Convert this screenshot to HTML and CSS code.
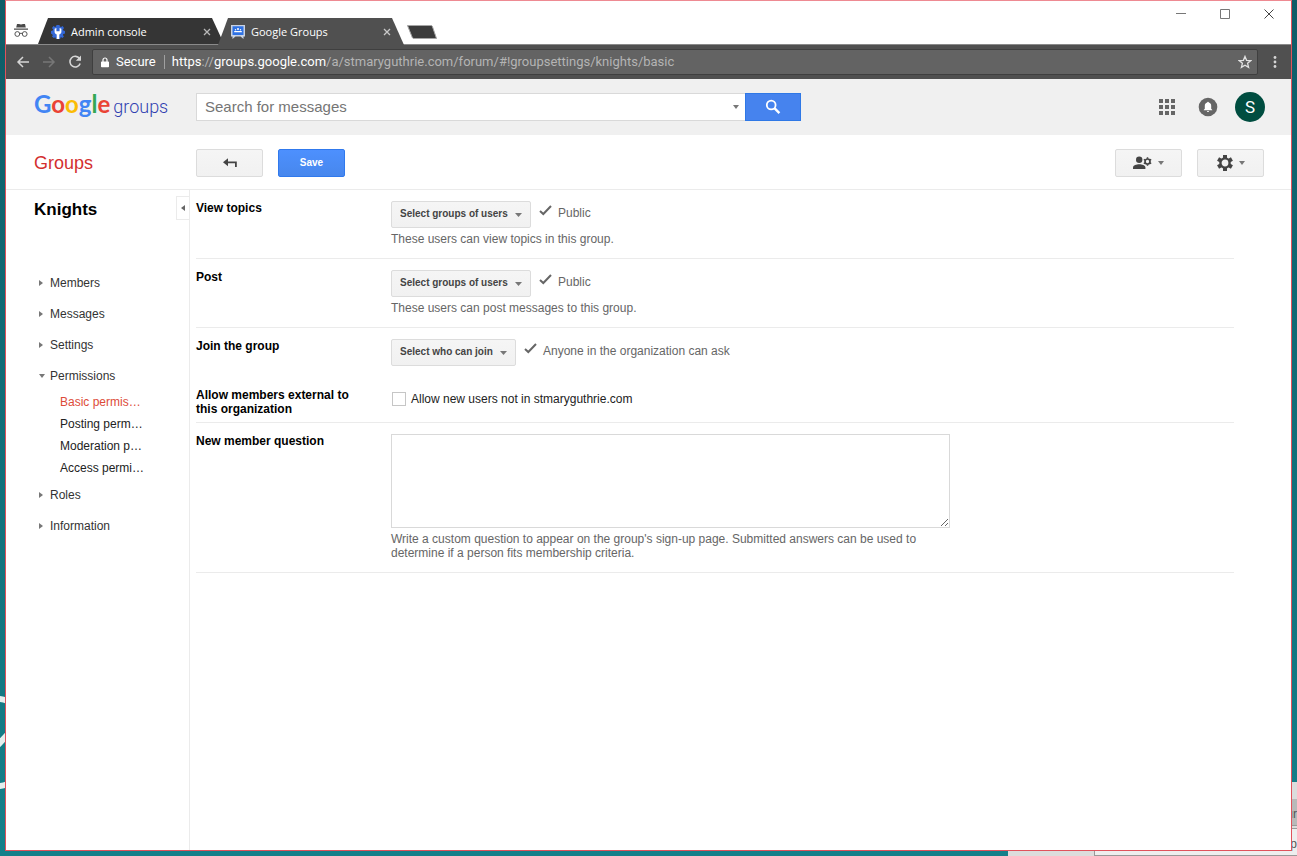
FILE: index.html
```html
<!DOCTYPE html>
<html lang="en">
<head>
    <meta charset="UTF-8">
    <meta name="viewport" content="width=device-width, initial-scale=1.0">
    <title>Google Groups</title>
    <link rel="stylesheet" href="styles.css">
</head>
<body>
    <!-- desktop behind the browser -->
    <svg class="wallpaper" width="6" height="100" viewBox="0 0 6 100" aria-hidden="true">
        <path d="M-2 3 Q3 3 8 5 M-2 49 L8 38 M-2 90 Q3 90 8 88" fill="none" stroke="#e4efee" stroke-width="6"/>
    </svg>
    <div class="back-window" aria-hidden="true">
        <div class="back-bar">ur</div>
        <div class="back-panel">p</div>
    </div>

    <div class="window">
        <div class="titlebar">
            <svg class="incognito" width="16" height="16" viewBox="0 0 16 16">
                <path d="M4 1h2l2 .6 2-.6h2l.8 3.500H3.200z M1 5.500h14v1.200H1z" fill="#4a4a4a"/>
                <g fill="none" stroke="#555" stroke-width="1"><circle cx="4.300" cy="11" r="2.400"/><circle cx="11.700" cy="11" r="2.400"/><path d="M6.700 10.600q1.300-.8 2.600 0"/></g>
            </svg>
            <div class="tab tab-back">
                <svg width="14" height="14" viewBox="0 0 14 14">
                    <path d="M5.500 0h3l.4 1.600 1.200.5L11.600 1 13 3l-1 1.500.3 1L14 6v2.500l-1.700.5-.4 1 1 1.500-1.500 1.500-1.500-.9L9 14H5l-.7-1.800-1.500.8L1 11.400l.9-1.500L0 8.500V6l1.700-.5.4-1L1 3l1.500-2 1.500 1L5 1.600z" fill="#3367d6"/>
                    <path d="M3.600 3.800v3c0 1.300.9 2.200 2.100 2.600V14h2.600V9.400c1.200-.4 2.100-1.300 2.100-2.600v-3L8.600 3v3.200H5.400V3z" fill="#fff"/>
                </svg>
                <span class="tab-title">Admin console</span>
                <button class="tab-close" aria-label="Close tab"><svg width="8" height="8" viewBox="0 0 8 8"><path d="M1 1l6 6M7 1L1 7" stroke="#b8b8b8" stroke-width="1.300"/></svg></button>
            </div>
            <div class="tab tab-active">
                <svg width="14" height="14" viewBox="0 0 14 14">
                    <path d="M0 0h14v11.500h-1.500V14L9.500 11.500H4.500L1.500 14V11.500H0z" fill="#c9d3e3"/>
                    <path d="M1.500 1.200h11v8.800h-11z" fill="#2f72e4"/>
                    <g fill="#fff"><circle cx="4.500" cy="4.800" r=".7"/><circle cx="7" cy="4" r="1"/><circle cx="9.500" cy="4.800" r=".7"/><path d="M3.200 6h7.600v1.300H3.200z"/></g>
                </svg>
                <span class="tab-title">Google Groups</span>
                <button class="tab-close" aria-label="Close tab"><svg width="8" height="8" viewBox="0 0 8 8"><path d="M1 1l6 6M7 1L1 7" stroke="#c8c8c8" stroke-width="1.300"/></svg></button>
            </div>
            <button class="new-tab" aria-label="New tab"><svg width="32" height="16" viewBox="0 0 32 16"><path d="M1.500 1.500h23.500q1 0 1.400 1l4.100 12H8q-1.200 0-1.700-1z" fill="#3b3b3b" stroke="#a5a5a5"/></svg></button>
            <div class="window-buttons">
                <button aria-label="Minimize"><svg width="10" height="10" viewBox="0 0 10 10"><path d="M0 4.500h10" stroke="#777"/></svg></button>
                <button aria-label="Maximize"><svg width="10" height="10" viewBox="0 0 10 10"><path d="M.5.5h9v9h-9z" fill="none" stroke="#777"/></svg></button>
                <button aria-label="Close"><svg width="10" height="10" viewBox="0 0 10 10"><path d="M.5.5l9 9M9.500.5l-9 9" stroke="#444"/></svg></button>
            </div>
        </div>

        <div class="toolbar">
            <button aria-label="Back"><svg width="14" height="14" viewBox="0 0 14 14"><path d="M13 7H2M7 2L2 7l5 5" fill="none" stroke="#d6d6d6" stroke-width="1.500"/></svg></button>
            <button aria-label="Forward"><svg width="14" height="14" viewBox="0 0 14 14"><path d="M1 7h11M7 2l5 5-5 5" fill="none" stroke="#777" stroke-width="1.500"/></svg></button>
            <button aria-label="Reload"><svg width="14" height="14" viewBox="0 0 14 14"><path d="M11.600 3.600A5.300 5.300 0 1 0 12.200 8.500" fill="none" stroke="#d6d6d6" stroke-width="1.600"/><path d="M13 .6v5.200H7.800z" fill="#d6d6d6"/></svg></button>
            <div class="omnibox">
                <svg width="8" height="11" viewBox="0 0 8 11"><path d="M.8 4.500h6.400a.8.800 0 0 1 .8.800v4.200a.8.800 0 0 1-.8.800H.8A.8.800 0 0 1 0 9.500V5.300a.8.800 0 0 1 .8-.8z" fill="#fff"/><path d="M2 5V3a2 2 0 0 1 4 0v2" fill="none" stroke="#fff" stroke-width="1.200"/></svg>
                <span class="secure">Secure</span>
                <span class="url"><b>https</b>://<b>groups.google.com</b>/a/stmaryguthrie.com/forum/#!groupsettings/knights/basic</span>
                <button class="star" aria-label="Bookmark this page"><svg width="14" height="14" viewBox="0 0 14 14"><path d="M7 1.400l1.600 3.900 4.200.3-3.200 2.700 1 4.100L7 10.200l-3.600 2.200 1-4.100L1.200 5.600l4.200-.3z" fill="none" stroke="#e2e2e2" stroke-width="1.300"/></svg></button>
            </div>
            <button class="menu" aria-label="Menu"><svg width="4" height="14" viewBox="0 0 4 14" fill="#d6d6d6"><circle cx="2" cy="2.500" r="1.400"/><circle cx="2" cy="7" r="1.400"/><circle cx="2" cy="11.500" r="1.400"/></svg></button>
        </div>

        <header class="header">
            <a class="logo" href="#"><span class="google"><span class="blue">G</span><span class="red">o</span><span class="yellow">o</span><span class="blue">g</span><span class="green">l</span><span class="red">e</span></span><span class="product">groups</span></a>
            <form class="search">
                <input type="text" placeholder="Search for messages" aria-label="Search for messages">
                <button type="button" class="search-options" aria-label="Search options"><i class="caret"></i></button>
                <button type="button" class="search-button" aria-label="Search"><svg width="16" height="16" viewBox="0 0 16 16"><circle cx="6.200" cy="6" r="4.400" fill="none" stroke="#fff" stroke-width="1.800"/><path d="M9.400 9.200l5 5" stroke="#fff" stroke-width="2.400"/></svg></button>
            </form>
            <div class="account">
                <button aria-label="Google apps"><svg width="16" height="16" viewBox="0 0 16 16" fill="#666"><path d="M0 0h4v4H0zM6 0h4v4H6zM12 0h4v4h-4zM0 6h4v4H0zM6 6h4v4H6zM12 6h4v4h-4zM0 12h4v4H0zM6 12h4v4H6zM12 12h4v4h-4z"/></svg></button>
                <button aria-label="Notifications"><svg width="20" height="20" viewBox="0 0 20 20"><circle cx="10" cy="10" r="9.300" fill="#666"/><path d="M10 4.800a.8.800 0 0 1 .8.800c1.600.4 2.400 1.600 2.400 3.300v2.800l1.100 1.200v.4H5.700v-.4l1.100-1.200V8.900c0-1.700.8-2.900 2.400-3.300a.8.800 0 0 1 .8-.8zM8.900 13.900h2.200a1.100 1.100 0 0 1-2.200 0z" fill="#fff"/></svg></button>
                <button class="avatar" aria-label="Account">S</button>
            </div>
        </header>

        <div class="actions">
            <a class="groups-link" href="#">Groups</a>
            <button class="btn" aria-label="Back to group"><svg width="14" height="10" viewBox="0 0 14 10"><path d="M5 .2v3.300h8.800V9h-1.800V5.200H5v3L0 4.200z" fill="#444"/></svg></button>
            <button class="btn btn-save">Save</button>
            <button class="btn btn-members" aria-label="Membership"><svg width="19" height="14" viewBox="0 0 19 14"><circle cx="6.200" cy="3.800" r="3.200" fill="#444"/><path d="M0 13v-1.500C0 9 3.500 8.200 6.200 8.200s6.200.8 6.200 3.300V13z" fill="#444"/><circle cx="14.500" cy="5.500" r="2.500" fill="none" stroke="#444" stroke-width="1.700"/><path d="M14.500 1.200v1.600M14.500 8.200v1.600M10.800 3.400l1.300.7M16.900 6.900l1.300.7M10.800 7.600l1.300-.7M16.900 4.100l1.300-.7" stroke="#444" stroke-width="1.500"/></svg><i class="caret"></i></button>
            <button class="btn" aria-label="Settings"><svg width="16" height="16" viewBox="0 0 16 16"><circle cx="8" cy="8" r="4.600" fill="none" stroke="#444" stroke-width="2.400"/><path d="M8 0v3M8 13v3M1.070 4l2.600 1.500M12.330 10.500l2.600 1.500M1.070 12l2.600-1.500M12.330 5.500l2.600-1.500" stroke="#444" stroke-width="4"/></svg><i class="caret"></i></button>
        </div>

        <div class="page">
            <aside class="sidebar">
                <button class="collapse" aria-label="Collapse sidebar"><i class="arrow-left"></i></button>
                <h1>Knights</h1>
                <nav>
                    <a class="section" href="#"><i class="arrow-right"></i>Members</a>
                    <a class="section" href="#"><i class="arrow-right"></i>Messages</a>
                    <a class="section" href="#"><i class="arrow-right"></i>Settings</a>
                    <a class="section" href="#"><i class="caret"></i>Permissions</a>
                    <div class="subsections">
                        <a class="selected" href="#">Basic permis…</a>
                        <a href="#">Posting perm…</a>
                        <a href="#">Moderation p…</a>
                        <a href="#">Access permi…</a>
                    </div>
                    <a class="section" href="#"><i class="arrow-right"></i>Roles</a>
                    <a class="section" href="#"><i class="arrow-right"></i>Information</a>
                </nav>
            </aside>

            <main class="settings">
                <div class="row">
                    <label class="row-label" for="view-topics">View topics</label>
                    <div class="row-body">
                        <div class="choice">
                            <select id="view-topics"><option>Select groups of users</option></select>
                            <svg class="check" width="13" height="11" viewBox="0 0 13 11"><path d="M1 6l3.300 3L12 1" fill="none" stroke="#666" stroke-width="2"/></svg>
                            <span>Public</span>
                        </div>
                        <p>These users can view topics in this group.</p>
                    </div>
                </div>
                <div class="row">
                    <label class="row-label" for="post">Post</label>
                    <div class="row-body">
                        <div class="choice">
                            <select id="post"><option>Select groups of users</option></select>
                            <svg class="check" width="13" height="11" viewBox="0 0 13 11"><path d="M1 6l3.300 3L12 1" fill="none" stroke="#666" stroke-width="2"/></svg>
                            <span>Public</span>
                        </div>
                        <p>These users can post messages to this group.</p>
                    </div>
                </div>
                <div class="row row-join">
                    <label class="row-label" for="join">Join the group</label>
                    <div class="row-body">
                        <div class="choice">
                            <select id="join"><option>Select who can join</option></select>
                            <svg class="check" width="13" height="11" viewBox="0 0 13 11"><path d="M1 6l3.300 3L12 1" fill="none" stroke="#666" stroke-width="2"/></svg>
                            <span>Anyone in the organization can ask</span>
                        </div>
                    </div>
                </div>
                <div class="row row-external">
                    <div class="row-label">Allow members external to this organization</div>
                    <div class="row-body">
                        <label class="check-label"><input type="checkbox">Allow new users not in stmaryguthrie.com</label>
                    </div>
                </div>
                <div class="row">
                    <label class="row-label" for="question">New member question</label>
                    <div class="row-body">
                        <textarea id="question"></textarea>
                        <p>Write a custom question to appear on the group's sign-up page. Submitted answers can be used to determine if a person fits membership criteria.</p>
                    </div>
                </div>
            </main>
        </div>
    </div>
</body>
</html>
```
FILE: styles.css
```css
* {
    box-sizing: border-box;
}
body {
    margin: 0;
    height: 100vh;
    padding: 0 5px 5px;
    background: linear-gradient(#0f5c67, #14808a);
    font-family: "Liberation Sans", Arial, sans-serif;
    font-size: 12px;
    line-height: 14px;
    color: #222;
    overflow: hidden;
}
button {
    display: flex;
    align-items: center;
    justify-content: center;
    padding: 0;
    border: 0;
    background: none;
    font-family: inherit;
    cursor: pointer;
}
a {
    color: inherit;
    text-decoration: none;
}
svg {
    flex: none;
}

/* desktop */
.wallpaper {
    position: absolute;
    left: 0;
    bottom: 60px;
}
.back-window {
    position: absolute;
    right: 0;
    bottom: 0;
    width: 289px;
    height: 74px;
    padding-top: 17px;
    background: #dcdcdc;
    overflow: hidden;
    text-align: right;
    font-size: 12px;
    color: #555;
}
.back-bar {
    height: 27px;
    padding-top: 8px;
    background: #b9b9b9;
    border-bottom: 1px solid #999;
}
.back-panel {
    height: 28px;
    margin: 2px 0 0 86px;
    padding-top: 8px;
    background: #eee;
    border: 1px solid #999;
    border-right: 0;
}

/* browser frame */
.window {
    position: relative;
    display: flex;
    flex-direction: column;
    height: 100%;
    background: #fff;
    border: 1px solid #e0525c;
    border-top-color: #ee8a92;
}
.titlebar {
    display: flex;
    align-items: flex-end;
    height: 44px;
    padding-left: 7px;
    border-bottom: 1px solid #8a8a8a;
    font-family: "Open Sans", "Segoe UI", sans-serif;
    font-size: 11px;
}
.incognito {
    margin: 0 9px 5px 0;
}
.tab {
    display: flex;
    align-items: center;
    width: 186px;
    height: 26px;
    padding: 1px 13px 0;
    gap: 6px;
    color: #fff;
    clip-path: polygon(10px 0, calc(100% - 12px) 0, 100% 100%, 0 100%);
}
.tab-back {
    background: #353535;
}
.tab-active {
    background: #505050;
    margin-left: -6px;
    margin-bottom: -1px;
    height: 27px;
}
.tab-title {
    flex: 1;
}
.tab-close {
    width: 8px;
    height: 16px;
}
.new-tab {
    margin: 0 0 4px 2px;
}
.window-buttons {
    display: flex;
    align-self: flex-start;
    margin-left: auto;
}
.window-buttons button {
    width: 44px;
    height: 26px;
}
.toolbar {
    display: flex;
    align-items: center;
    height: 34px;
    padding: 0 0 0 10px;
    background: #505050;
    font-family: Roboto, "Segoe UI", sans-serif;
    font-size: 13px;
}
.toolbar > button {
    width: 14px;
    margin-right: 12px;
}
.toolbar > .menu {
    width: 33px;
    margin: 0;
}
.omnibox {
    display: flex;
    flex: 1;
    align-items: center;
    height: 26px;
    margin-left: -2px;
    padding: 0 5px 0 8px;
    background: #636363;
    border: 1px solid #3f3f3f;
    border-radius: 2px;
    color: #fff;
}
.secure {
    margin-left: 7px;
    padding-right: 8px;
    border-right: 1px solid #a0a0a0;
}
.url {
    flex: 1;
    margin-left: 7px;
    color: #b4b4b4;
}
.url b {
    color: #fff;
    font-weight: normal;
}

/* groups header */
.header {
    display: flex;
    align-items: center;
    height: 56px;
    padding: 0 26px 0 28px;
    background: #f0f0f0;
}
.logo {
    display: flex;
    align-items: baseline;
    gap: 3px;
    width: 162px;
    padding-bottom: 4px;
    line-height: 28px;
}
.google {
    font-family: Lato, sans-serif;
    font-size: 24px;
    font-weight: bold;
}
.product {
    font-family: Roboto, sans-serif;
    font-size: 18px;
    font-weight: 300;
    color: #3040b0;
}
.blue {
    color: #4285f4;
}
.red {
    color: #ea4335;
}
.yellow {
    color: #fbbc05;
}
.green {
    color: #34a853;
}
.search {
    display: flex;
    width: 605px;
    height: 28px;
}
.search input {
    flex: 1;
    min-width: 0;
    padding: 0 8px 1px;
    border: 1px solid #d9d9d9;
    border-right: 0;
    font: 15px "Liberation Sans", Arial, sans-serif;
    outline: none;
}
.search input::placeholder {
    color: #757575;
}
.search-options {
    width: 19px;
    background: #fff;
    border: 1px solid #d9d9d9;
    border-width: 1px 0;
}
.search-button {
    width: 56px;
    background: #4683ee;
    border: 1px solid #2f78e6;
}
.account {
    display: flex;
    align-items: center;
    gap: 17px;
    margin-left: auto;
}
.account button:first-child {
    margin-right: 6px;
}
.avatar {
    width: 30px;
    height: 30px;
    border-radius: 50%;
    background: #004d40;
    color: #fff;
    font-family: Roboto, sans-serif;
    font-size: 17px;
}

/* action bar */
.actions {
    display: flex;
    align-items: center;
    gap: 15px;
    height: 55px;
    padding: 1px 27px 0 28px;
    border-bottom: 1px solid #ebebeb;
}
.groups-link {
    width: 147px;
    color: #d32f2f;
    font-size: 18px;
    line-height: 20px;
}
.btn {
    gap: 6px;
    width: 67px;
    height: 28px;
    background: linear-gradient(#f5f5f5, #f1f1f1);
    border: 1px solid #dcdcdc;
    border-radius: 2px;
}
.btn-save {
    background: linear-gradient(#4d90fe, #4787ed);
    border-color: #3079ed;
    color: #fff;
    font-size: 10px;
    font-weight: bold;
}
.btn-members {
    margin-left: auto;
}
.caret {
    border: 3px solid transparent;
    border-top: 4px solid #777;
    border-bottom: 0;
}
.arrow-right {
    border: 3px solid transparent;
    border-left: 4px solid #777;
    border-right: 0;
}
.arrow-left {
    border: 3px solid transparent;
    border-right: 4px solid #666;
    border-left: 0;
}

.page {
    display: flex;
    flex: 1;
}

/* sidebar */
.sidebar {
    position: relative;
    width: 184px;
    padding: 10px 0 0 28px;
    border-right: 1px solid #ebebeb;
}
.sidebar h1 {
    margin: 0 0 47px;
    color: #000;
    font-size: 17px;
    line-height: 20px;
}
.collapse {
    position: absolute;
    top: 6px;
    right: 0;
    width: 13px;
    height: 24px;
    border: 1px solid #ebebeb;
    border-right: 0;
}
.sidebar a {
    display: flex;
    align-items: center;
}
.section {
    height: 31px;
    gap: 6px;
    padding-left: 5px;
    color: #333;
}
.section .arrow-right {
    margin-right: 1px;
}
.section .caret {
    margin-right: -1px;
}
.subsections {
    padding-left: 26px;
}
.subsections a {
    height: 22px;
}
.subsections .selected {
    color: #dd4b39;
}

/* settings form */
.settings {
    flex: 1;
    padding: 0 57px 0 6px;
}
.row {
    display: grid;
    grid-template-columns: 195px 1fr;
    padding: 11px 0 12px;
    border-bottom: 1px solid #ebebeb;
}
.row-label {
    padding-right: 30px;
    color: #000;
    font-weight: bold;
}
.row p {
    max-width: 558px;
    margin: 4px 0 0;
    color: #666;
}
.choice {
    display: flex;
    align-items: center;
    color: #666;
}
.choice span {
    padding-bottom: 3px;
}
.check {
    margin: 0 6px 8px 8px;
}
select {
    height: 27px;
    padding: 0 22px 2px 8px;
    border: 1px solid #dcdcdc;
    border-radius: 2px;
    background: url("data:image/svg+xml,%3Csvg xmlns='http://www.w3.org/2000/svg' width='7' height='4'%3E%3Cpath d='M0 0h7L3.500 4z' fill='%23777'/%3E%3C/svg%3E") no-repeat right 8px center, linear-gradient(#f5f5f5, #f1f1f1);
    color: #444;
    font: bold 10px "Liberation Sans", Arial, sans-serif;
    appearance: none;
}
.row-join {
    padding-bottom: 11px;
    border-bottom: 0;
}
.row-external {
    padding-bottom: 6px;
}
.check-label {
    display: flex;
    align-items: center;
    height: 22px;
    gap: 5px;
}
.check-label input {
    width: 14px;
    height: 14px;
    margin: 0 0 0 1px;
    border: 1px solid #c6c6c6;
    background: #fff;
    appearance: none;
}
textarea {
    display: block;
    width: 100%;
    max-width: 559px;
    height: 94px;
    border: 1px solid #d9d9d9;
    outline: none;
}
```
